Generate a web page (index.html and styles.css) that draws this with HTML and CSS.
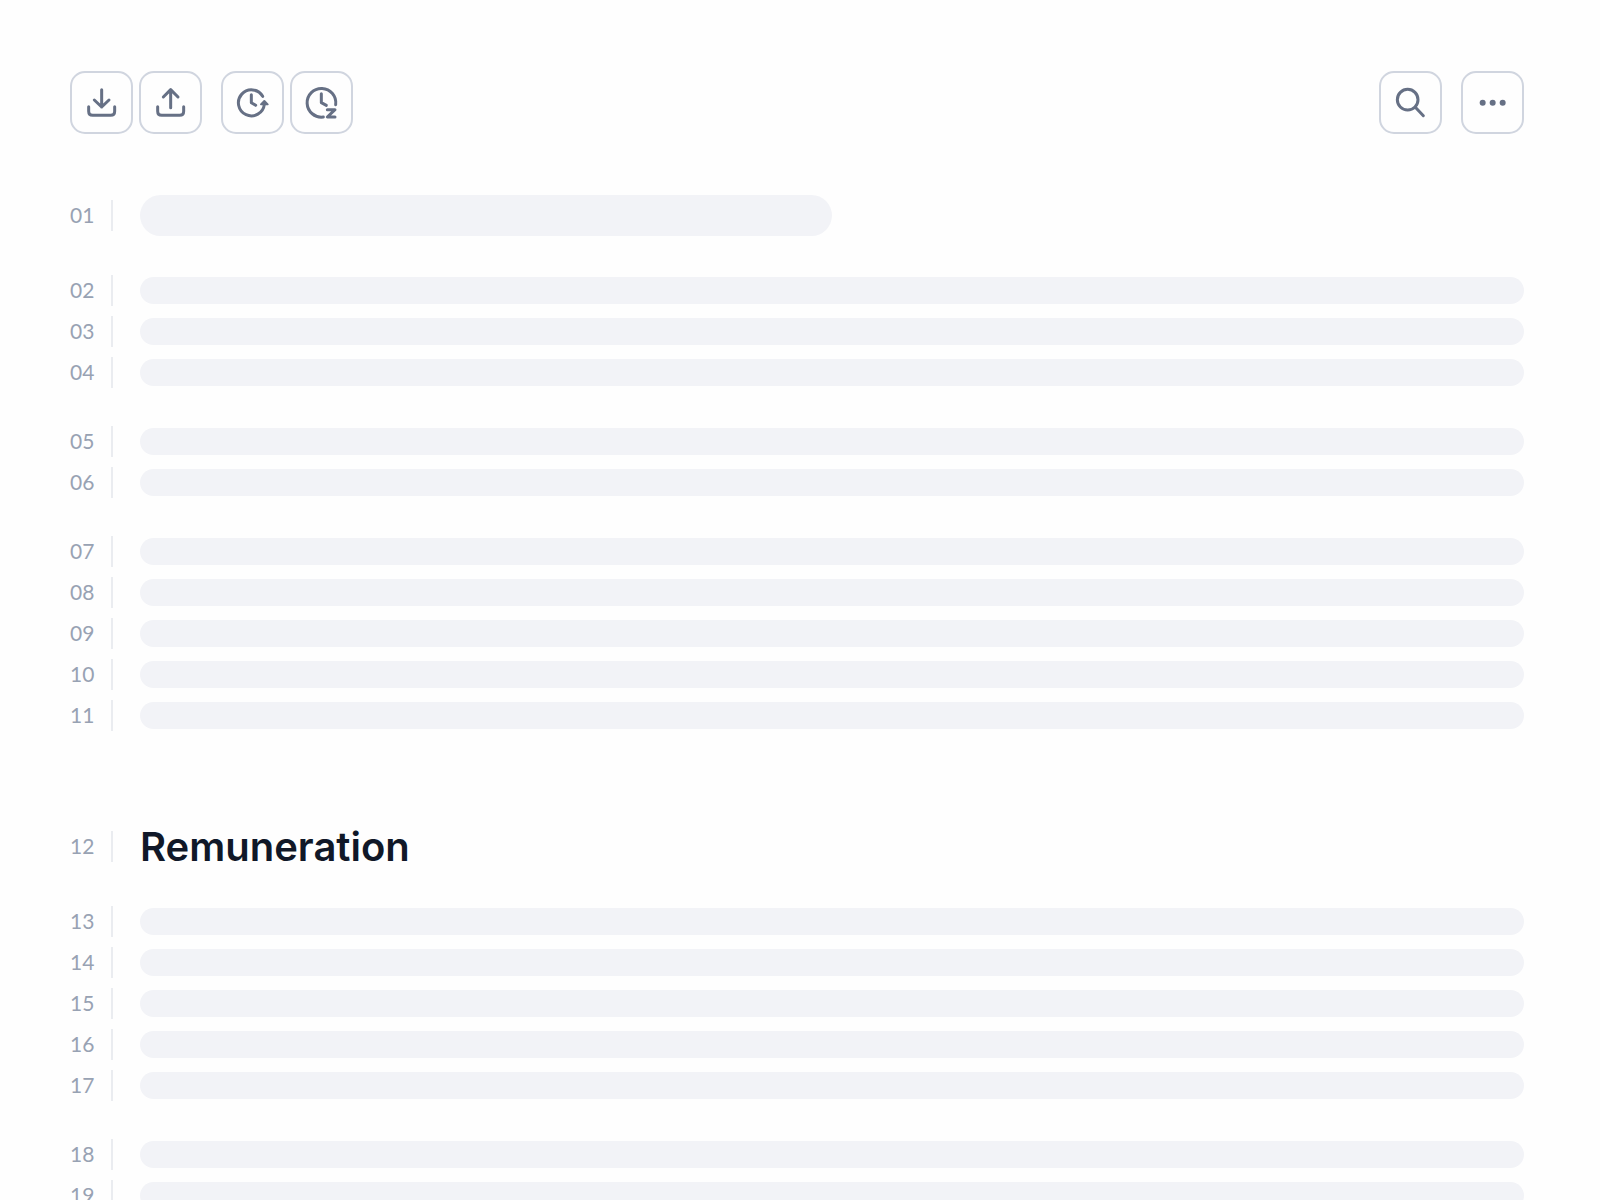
FILE: index.html
```html
<!DOCTYPE html>
<html lang="en">
<head>
    <meta charset="utf-8">
    <title>Document</title>
    <link rel="stylesheet" href="styles.css">
</head>
<body>
    <header class="toolbar">
        <div class="button-group">
            <button type="button" aria-label="Download">
                <svg viewBox="0 0 96 96"><path d="M47 8v52M25 39l22 21 22-21M8 59v14q0 12 12 12h54q12 0 12-12V59"/></svg>
            </button>
            <button type="button" aria-label="Upload">
                <svg viewBox="0 0 96 96"><path d="M47 8v54M25 30L47 8l22 22M8 59v14q0 12 12 12h54q12 0 12-12V59"/></svg>
            </button>
        </div>
        <div class="button-group">
            <button type="button" aria-label="Refresh time">
                <svg viewBox="0 0 96 96">
                    <path d="M77 28A39 39 0 1 0 82 52M43 23v24l13 8"/>
                    <path class="solid" d="M72 52l10-10 10 10z"/>
                </svg>
            </button>
            <button type="button" aria-label="Snooze">
                <svg viewBox="0 0 96 96"><path d="M89 53A43 43 0 1 0 52 90M46 20v27l15 8M64 68h23L64 90h23"/></svg>
            </button>
        </div>
        <div class="button-group end">
            <button type="button" aria-label="Search">
                <svg viewBox="0 0 96 96"><circle cx="38" cy="38" r="31"/><path d="M61 61l24 25"/></svg>
            </button>
            <button type="button" aria-label="More">
                <svg viewBox="0 0 96 96" class="dots"><circle cx="17" cy="47" r="9"/><circle cx="47" cy="47" r="9"/><circle cx="77" cy="47" r="9"/></svg>
            </button>
        </div>
    </header>

    <main>
        <section>
            <div class="line title"><span class="number">01</span><div class="bar"></div></div>
            <div class="paragraph">
                <div class="line"><span class="number">02</span><div class="bar"></div></div>
                <div class="line"><span class="number">03</span><div class="bar"></div></div>
                <div class="line"><span class="number">04</span><div class="bar"></div></div>
            </div>
            <div class="paragraph">
                <div class="line"><span class="number">05</span><div class="bar"></div></div>
                <div class="line"><span class="number">06</span><div class="bar"></div></div>
            </div>
            <div class="paragraph">
                <div class="line"><span class="number">07</span><div class="bar"></div></div>
                <div class="line"><span class="number">08</span><div class="bar"></div></div>
                <div class="line"><span class="number">09</span><div class="bar"></div></div>
                <div class="line"><span class="number">10</span><div class="bar"></div></div>
                <div class="line"><span class="number">11</span><div class="bar"></div></div>
            </div>
        </section>

        <section>
            <div class="line title"><span class="number">12</span><h2>Remuneration</h2></div>
            <div class="paragraph">
                <div class="line"><span class="number">13</span><div class="bar"></div></div>
                <div class="line"><span class="number">14</span><div class="bar"></div></div>
                <div class="line"><span class="number">15</span><div class="bar"></div></div>
                <div class="line"><span class="number">16</span><div class="bar"></div></div>
                <div class="line"><span class="number">17</span><div class="bar"></div></div>
            </div>
            <div class="paragraph">
                <div class="line"><span class="number">18</span><div class="bar"></div></div>
                <div class="line"><span class="number">19</span><div class="bar"></div></div>
            </div>
        </section>
    </main>
</body>
</html>
```
FILE: styles.css
```css
html {
    height: 100%;
    overflow: hidden;
}
body {
    box-sizing: border-box;
    height: 100%;
    margin: 0;
    padding: 71px 76px 0 70px;
    overflow: hidden;
    background: #fefefe;
    font-family: Lato, sans-serif;
}

/* toolbar */
.toolbar {
    display: flex;
    gap: 19px;
    margin-bottom: 61px;
}
.button-group {
    display: flex;
    gap: 6px;
}
.button-group.end {
    gap: 19px;
    margin-left: auto;
}
button {
    display: flex;
    align-items: center;
    justify-content: center;
    box-sizing: border-box;
    width: 63px;
    height: 63px;
    padding: 0;
    border: 2px solid #d0d5df;
    border-radius: 15px;
    background: #fefefe;
}
svg {
    width: 32px;
    height: 32px;
    overflow: visible;
    fill: none;
    stroke: #667085;
    stroke-width: 9;
    stroke-linecap: round;
    stroke-linejoin: round;
}
.solid {
    fill: #667085;
    stroke-width: 6;
}
.dots {
    fill: #667085;
    stroke: none;
}

/* document lines */
section + section {
    margin-top: 90px;
}
.paragraph + .paragraph {
    margin-top: 28px;
}
.line {
    display: flex;
    align-items: center;
    height: 41px;
}
.title {
    margin-bottom: 34px;
}
.number {
    box-sizing: border-box;
    width: 43px;
    height: 31px;
    margin-right: 27px;
    border-right: 2px solid #eaecf0;
    color: #98a2b3;
    font-size: 21px;
    line-height: 29px;
}
.bar {
    flex: 1;
    height: 27px;
    border-radius: 14px;
    background: #f2f3f7;
}
.title .bar {
    /* half of the text column */
    flex: 0 0 calc(50% - 35px);
    height: 41px;
    border-radius: 21px;
}
h2 {
    margin: 0;
    color: #101828;
    font-family: Inter, sans-serif;
    font-size: 40px;
    font-weight: 600;
    line-height: 41px;
}
```
